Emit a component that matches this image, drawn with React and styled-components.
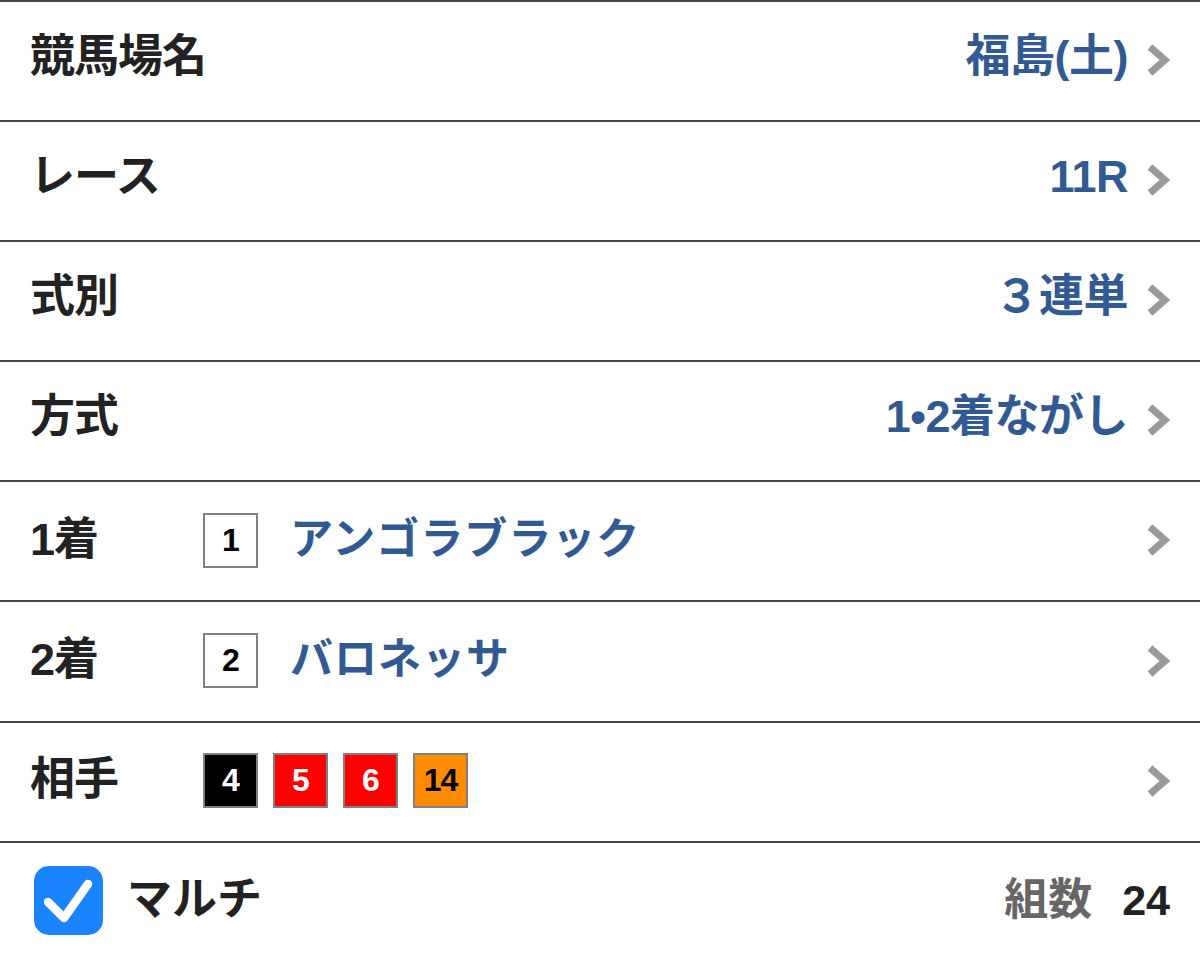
import React from 'react';
import styled, { createGlobalStyle } from 'styled-components';

const GlobalStyle = createGlobalStyle`
  html, body {
    margin: 0;
    padding: 0;
    background: #fff;
  }
  body {
    font-family: "Liberation Sans", "Noto Sans CJK JP", sans-serif;
    font-weight: 700;
    color: #222;
  }
`;

const List = styled.div`
  width: 1200px;
  border-top: 2px solid #444;
`;

const Row = styled.div`
  display: flex;
  align-items: center;
  padding: 0 30px 2px 30px;
  box-sizing: border-box;
  height: ${(p) => (p.$last ? '118px' : '120.1px')};
  border-bottom: ${(p) => (p.$last ? 'none' : '2px solid #444')};
`;

const Text = styled.div`
  line-height: 1;
  padding-bottom: ${(p) => (p.$lift ? '7px' : '2px')};
  font-size: 45px;
`;

const Label = styled(Text)`
  letter-spacing: -1px;
  color: #222;
  width: ${(p) => (p.$fixed ? '173px' : 'auto')};
  flex-shrink: 0;
`;

const Value = styled(Text)`
  margin-left: auto;
  color: #325a92;
  letter-spacing: -0.5px;
`;

const Name = styled(Text)`
  font-size: 43px;
  color: #325a92;
  margin-left: 32px;
  letter-spacing: 1px;
`;

const Boxes = styled.div`
  display: flex;
  gap: 15px;
`;

const NumBox = styled.div`
  width: 55px;
  height: 55px;
  box-sizing: border-box;
  border: 2px solid #808080;
  background: ${(p) => p.$bg};
  color: ${(p) => p.$fg};
  display: flex;
  align-items: center;
  justify-content: center;
  font-family: "Liberation Sans", sans-serif;
  font-size: 32px;
  font-weight: 700;
  letter-spacing: -1px;
`;

const ChevronWrap = styled.div`
  margin-left: ${(p) => (p.$auto ? 'auto' : '18px')};
  display: flex;
  align-items: center;
`;

const CheckBox = styled.div`
  width: 69px;
  height: 69px;
  border-radius: 15px;
  background: #1a84ff;
  display: flex;
  align-items: center;
  justify-content: center;
  margin-left: 4px;
`;

const MultiLabel = styled(Text)`
  margin-left: 24px;
  color: #222;
`;

const Count = styled.div`
  margin-left: auto;
  display: flex;
  align-items: baseline;
  gap: 30px;
`;

const CountLabel = styled(Text)`
  font-size: 44px;
  color: #666;
`;

const CountValue = styled(Text)`
  font-size: 43px;
  color: #222;
`;

const Chevron = () => (
  <svg width="24" height="32" viewBox="0 0 24 32">
    <polyline points="4,3 19,16 4,29" fill="none" stroke="#999" strokeWidth="7" strokeLinejoin="miter" />
  </svg>
);

const Check = () => (
  <svg width="69" height="69" viewBox="0 0 69 69">
    <polyline points="14,36 30,52 54,18" fill="none" stroke="#fff" strokeWidth="8.5" strokeLinecap="round" strokeLinejoin="round" />
  </svg>
);

const frameColors = {
  1: ['#fff', '#000'],
  2: ['#fff', '#000'],
  4: ['#000', '#fff'],
  5: ['#f00', '#fff'],
  6: ['#f00', '#fff'],
  14: ['#ff8c00', '#000'],
};

const simpleRows = [
  { label: '競馬場名', value: '福島(土)' },
  { label: 'レース', value: '11R' },
  { label: '式別', value: '３連単' },
  { label: '方式', value: '1•2着ながし' },
];

const horseRows = [
  { label: '1着', num: 1, name: 'アンゴラブラック' },
  { label: '2着', num: 2, name: 'バロネッサ' },
];

const partners = [4, 5, 6, 14];

export default function App() {
  return (
    <>
      <GlobalStyle />
      <List>
        {simpleRows.map((r) => (
          <Row key={r.label}>
            <Label $lift>{r.label}</Label>
            <Value $lift>{r.value}</Value>
            <ChevronWrap>
              <Chevron />
            </ChevronWrap>
          </Row>
        ))}
        {horseRows.map((r) => (
          <Row key={r.label}>
            <Label $fixed>{r.label}</Label>
            <NumBox $bg={frameColors[r.num][0]} $fg={frameColors[r.num][1]}>
              {r.num}
            </NumBox>
            <Name>{r.name}</Name>
            <ChevronWrap $auto>
              <Chevron />
            </ChevronWrap>
          </Row>
        ))}
        <Row>
          <Label $fixed>相手</Label>
          <Boxes>
            {partners.map((n) => (
              <NumBox key={n} $bg={frameColors[n][0]} $fg={frameColors[n][1]}>
                {n}
              </NumBox>
            ))}
          </Boxes>
          <ChevronWrap $auto>
            <Chevron />
          </ChevronWrap>
        </Row>
        <Row $last>
          <CheckBox>
            <Check />
          </CheckBox>
          <MultiLabel>マルチ</MultiLabel>
          <Count>
            <CountLabel>組数</CountLabel>
            <CountValue>24</CountValue>
          </Count>
        </Row>
      </List>
    </>
  );
}
